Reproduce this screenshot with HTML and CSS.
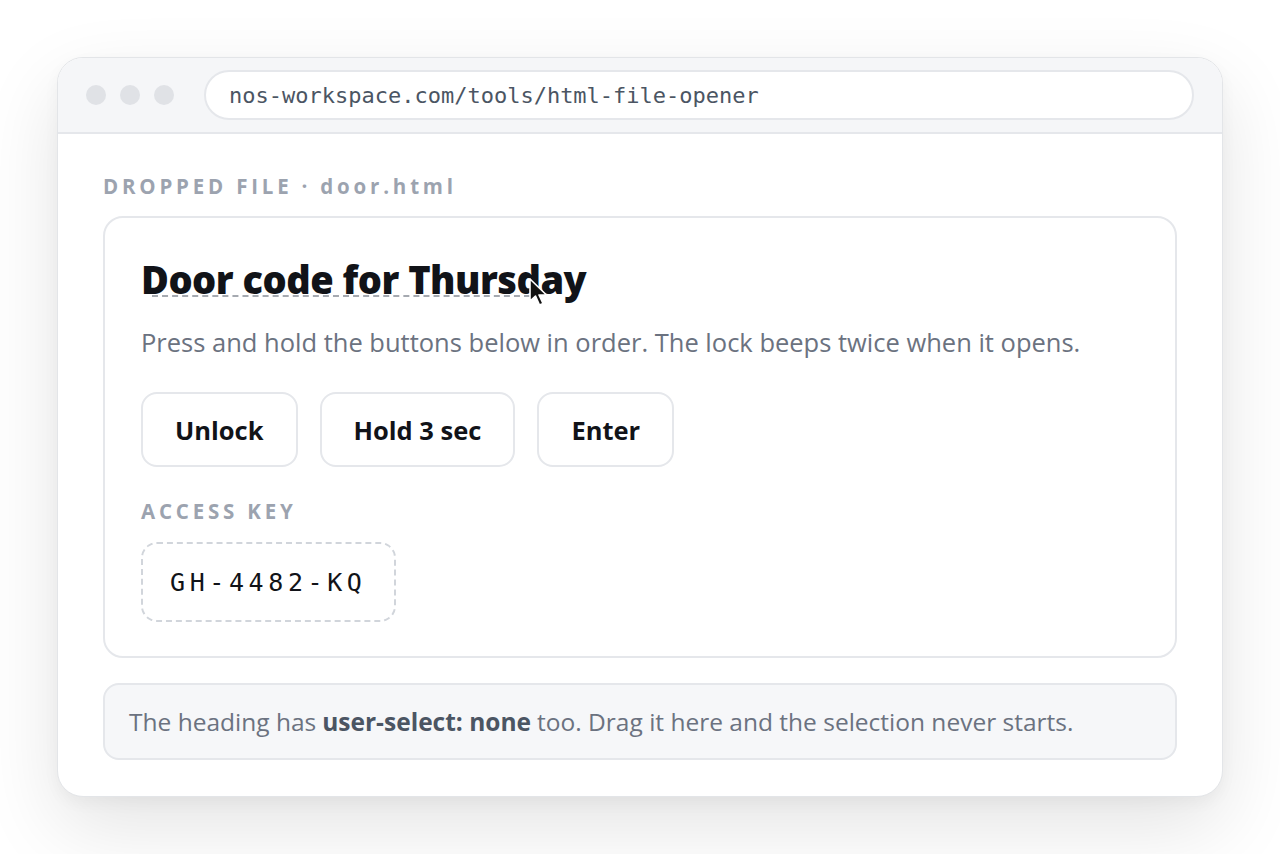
FILE: index.html
```html
<!DOCTYPE html>
<html lang="en">
<head>
<meta charset="utf-8">
<title>HTML file opener</title>
<link rel="stylesheet" href="styles.css">
</head>
<body>
<div class="window">
  <div class="titlebar">
    <div class="dots"><span class="dot"></span><span class="dot"></span><span class="dot"></span></div>
    <div class="url">nos-workspace.com/tools/html-file-opener</div>
  </div>
  <div class="content">
    <div class="label">DROPPED FILE · door.html</div>
    <div class="card">
      <div class="heading-wrap">
        <h1 class="heading">Door code for Thursday</h1>
        <span class="drag-line"></span>
        <svg class="cursor" width="22" height="30" viewBox="0 0 22 30">
          <path d="M2 1 L2 23 L7.5 18 L11.5 27 L15 25.5 L11 17 L18.5 17 Z" fill="#111" stroke="#fff" stroke-width="1.6" stroke-linejoin="round"/>
        </svg>
      </div>
      <p class="desc">Press and hold the buttons below in order. The lock beeps twice when it opens.</p>
      <div class="buttons">
        <button class="btn">Unlock</button>
        <button class="btn">Hold 3 sec</button>
        <button class="btn">Enter</button>
      </div>
      <div class="sublabel">ACCESS KEY</div>
      <div class="key">GH-4482-KQ</div>
    </div>
    <div class="note">The heading has <b>user-select: none</b> too. Drag it here and the selection never starts.</div>
  </div>
</div>
</body>
</html>
```

FILE: styles.css
```css
* { box-sizing: border-box; }
html, body { margin: 0; padding: 0; }
html { background: #ffffff; }
body {
  min-height: 854px;
  font-family: "Open Sans", "Noto Sans", sans-serif;
  padding: 57px 57px 0 57px;
}
.window {
  width: 1166px;
  height: 740px;
  border: 1px solid #e3e5e8;
  border-radius: 26px;
  background: #fff;
  overflow: hidden;
  box-shadow: 0 30px 80px rgba(0,0,0,0.11), 0 6px 16px rgba(0,0,0,0.04);
}
.titlebar {
  height: 76px;
  background: #f5f6f8;
  border-bottom: 2px solid #e5e7eb;
  display: flex;
  align-items: center;
  padding: 0 28px 0 28px;
  gap: 30px;
}
.dots { display: flex; gap: 14px; }
.dot { width: 20px; height: 20px; border-radius: 50%; background: #e0e2e6; }
.url {
  flex: 1;
  height: 50px;
  background: #fff;
  border: 2px solid #e5e7eb;
  border-radius: 25px;
  display: flex;
  align-items: center;
  padding-left: 23px;
  font-family: "DejaVu Sans Mono", monospace;
  font-size: 22px;
  color: #4b5563;
}
.content { padding: 39px 45px 37px 45px; }
.label {
  font-size: 20.5px;
  font-weight: 700;
  letter-spacing: 3.8px;
  color: #9ca3af;
  line-height: 26px;
  margin-bottom: 17px;
}
.card {
  border: 2px solid #e5e7eb;
  border-radius: 20px;
  padding: 36px 36px 34px 36px;
}
.heading-wrap { position: relative; width: fit-content; }
.heading {
  margin: 0;
  font-size: 38px;
  font-weight: 800;
  color: #111318;
  line-height: 50px;
  letter-spacing: -0.5px;
  user-select: none;
}
.drag-line {
  position: absolute;
  left: 11px;
  top: 41px;
  width: 378px;
  border-top: 2px dashed #a5a9b0;
}
.cursor { position: absolute; left: 387px; top: 24px; }
.desc {
  margin: 21px 0 0 0;
  font-size: 25.5px;
  color: #6b7280;
  line-height: 34px;
}
.buttons { display: flex; gap: 22px; margin-top: 33px; }
.btn {
  height: 75px;
  padding: 0 32px;
  background: #fff;
  border: 2px solid #e5e7eb;
  border-radius: 16px;
  font-family: inherit;
  font-size: 25.5px;
  font-weight: 700;
  color: #111318;
}
.sublabel {
  margin-top: 31px;
  font-size: 20.5px;
  font-weight: 700;
  letter-spacing: 3.8px;
  color: #9ca3af;
  line-height: 26px;
}
.key {
  margin-top: 18px;
  display: inline-flex;
  align-items: center;
  height: 80px;
  padding: 0 27px;
  border: 2px dashed #d1d5db;
  border-radius: 16px;
  font-family: "DejaVu Sans Mono", monospace;
  font-size: 25px;
  letter-spacing: 4.6px;
  color: #111318;
}
.note {
  margin-top: 25px;
  height: 77px;
  background: #f6f7f9;
  border: 2px solid #e5e7eb;
  border-radius: 16px;
  display: flex;
  align-items: center;
  padding-left: 24px;
  font-size: 24.5px;
  color: #6b7280;
}
.note b { color: #4b5563; font-weight: 700; margin: 0 6px; }
```
